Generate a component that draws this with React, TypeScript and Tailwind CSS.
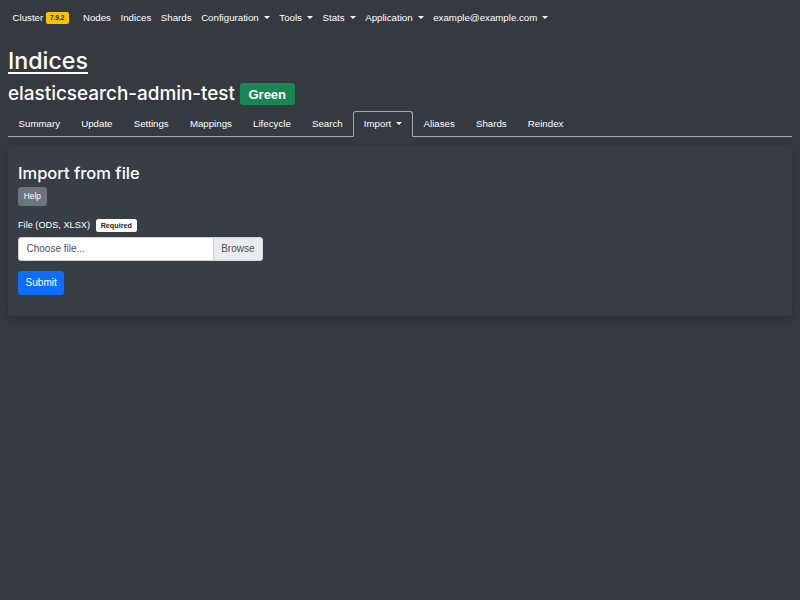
import React from "react";

const body = { fontFamily: "'Liberation Sans', Arial, sans-serif" };
const heading = { fontFamily: "Inter, 'Liberation Sans', sans-serif" };

function Caret() {
  return <span className="ml-[5px] inline-block h-0 w-0 -translate-y-[1px] border-x-[3px] border-t-[3px] border-x-transparent border-t-white align-middle" />;
}

const navItems: { label: string; dropdown?: boolean }[] = [
  { label: "Nodes" },
  { label: "Indices" },
  { label: "Shards" },
  { label: "Configuration", dropdown: true },
  { label: "Tools", dropdown: true },
  { label: "Stats", dropdown: true },
  { label: "Application", dropdown: true },
  { label: "example@example.com", dropdown: true },
];

const tabs = ["Summary", "Update", "Settings", "Mappings", "Lifecycle", "Search", "Import", "Aliases", "Shards", "Reindex"];

export default function App() {
  return (
    <div className="min-h-[600px] bg-[#343a40] text-white" style={body}>
      {/* Navbar */}
      <nav className="flex h-[34px] items-center px-[12.5px] pt-[2px] text-[9.7px] leading-[14.4px] text-white">
        <span className="mr-[9.6px] flex items-center">
          Cluster
          <span className="ml-[2.5px] rounded-[2px] bg-[#ffc107] px-[4.2px] py-[2.3px] text-[6.5px] font-bold leading-[6.5px] text-[#212529]">7.9.2</span>
        </span>
        {navItems.map((item) => (
          <span key={item.label} className="flex items-center px-[4.8px]">
            {item.label}
            {item.dropdown && <Caret />}
          </span>
        ))}
      </nav>

      <main className="px-[8px]">
        <h1 className="mt-[12.5px] text-[23.2px] font-medium leading-[28.8px] underline decoration-[1.5px] underline-offset-[3px]" style={heading}>
          Indices
        </h1>
        <div className="mt-[6.5px] flex h-[23px] items-center gap-[5px]">
          <h2 className="text-[18.9px] font-medium leading-[23px]" style={heading}>elasticsearch-admin-test</h2>
          <span className="mt-[2px] rounded-[3px] bg-[#198754] px-[8.5px] py-[4.5px] text-[13px] font-bold leading-[13px]">Green</span>
        </div>

        {/* Tabs */}
        <ul className="mt-[6.5px] flex border-b border-[#a3a8ad] text-[9.7px] leading-[14.4px]">
          {tabs.map((t) =>
            t === "Import" ? (
              <li key={t} className="-mb-px flex h-[26px] items-center rounded-t-[3px] border border-[#a3a8ad] border-b-[#343a40] bg-[#343a40] px-[9.6px]">
                {t}
                <Caret />
              </li>
            ) : (
              <li key={t} className="flex h-[25px] items-center border border-transparent px-[9.6px]">{t}</li>
            )
          )}
        </ul>

        {/* Card */}
        <section className="mt-[10px] rounded-[3px] bg-[#383e45] px-[10px] pb-[21px] pt-[16px] shadow-[0_2px_10px_rgba(0,0,0,0.22)]">
          <h3 className="text-[16.5px] font-medium leading-[20px]" style={heading}>Import from file</h3>
          <button className="mt-[4px] flex h-[19px] items-center rounded-[3px] border border-[#6c757d] bg-[#6c757d] px-[4.8px] text-[8.4px] text-white">Help</button>
          <div className="mt-[12px] flex h-[14.4px] items-center gap-[6px] text-[9.2px]">
            <span>File (ODS, XLSX)</span>
            <span className="rounded-[2.5px] bg-white px-[4.7px] py-[2.6px] text-[7.2px] font-bold leading-[7.2px] text-[#212529]">Required</span>
          </div>
          <div className="mt-[4px] flex h-[24px] w-[245px] overflow-hidden rounded-[3px] border border-[#ced4da] bg-white text-[10px]">
            <span className="flex flex-1 items-center px-[7.5px] text-[#495057]">Choose file...</span>
            <span className="flex items-center border-l border-[#ced4da] bg-[#e9ecef] px-[7.5px] text-[#495057]">Browse</span>
          </div>
          <button className="mt-[10px] flex h-[24px] items-center rounded-[3px] bg-[#0d6efd] px-[7.6px] text-[10px] text-white">Submit</button>
        </section>
      </main>
    </div>
  );
}
